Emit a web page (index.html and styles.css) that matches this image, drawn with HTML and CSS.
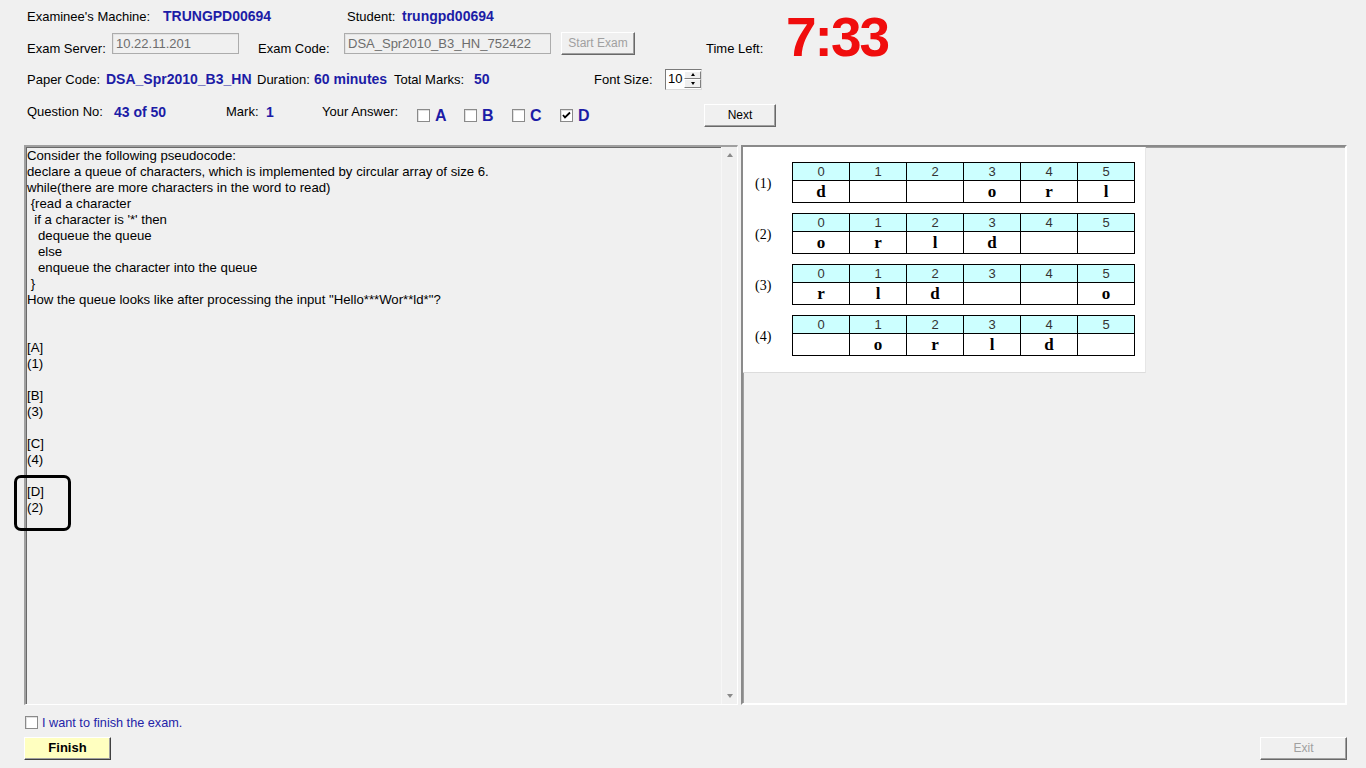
FILE: index.html
```html
<!DOCTYPE html>
<html>
<head>
<meta charset="utf-8">
<link rel="stylesheet" href="styles.css">
</head>
<body>
<div class="top">
  <div class="head">
    <div class="head-left">
      <div class="row row1">
        <span class="lbl">Examinee's Machine:</span>
        <span class="val">TRUNGPD00694</span>
        <span class="lbl">Student:</span>
        <span class="val">trungpd00694</span>
      </div>
      <div class="row row2">
        <span class="lbl low">Exam Server:</span>
        <span class="cell"><span class="tbox tb-server">10.22.11.201</span></span>
        <span class="lbl low">Exam Code:</span>
        <span class="cell"><span class="tbox tb-code">DSA_Spr2010_B3_HN_752422</span></span>
        <span class="cell"><span class="btn btn-start">Start Exam</span></span>
        <span class="lbl low">Time Left:</span>
      </div>
    </div>
    <div class="timer">7:33</div>
  </div>
  <div class="row row3">
    <span class="lbl">Paper Code:</span>
    <span class="val">DSA_Spr2010_B3_HN</span>
    <span class="lbl">Duration:</span>
    <span class="val">60 minutes</span>
    <span class="lbl">Total Marks:</span>
    <span class="val">50</span>
    <span class="lbl">Font Size:</span>
    <span class="spin"><span class="spin-val">10</span><span class="spin-btns"><span class="sb"><span class="tri-up"></span></span><span class="sb"><span class="tri-down"></span></span></span></span>
  </div>
  <div class="row row4">
    <span class="lbl">Question No:</span>
    <span class="val">43 of 50</span>
    <span class="lbl">Mark:</span>
    <span class="val">1</span>
    <span class="lbl">Your Answer:</span>
    <span class="ans"><span class="cb"></span><span class="letter">A</span></span>
    <span class="ans"><span class="cb"></span><span class="letter">B</span></span>
    <span class="ans"><span class="cb"></span><span class="letter">C</span></span>
    <span class="ans"><span class="cb"><svg width="11" height="11" viewBox="0 0 11 11"><polyline points="2,5 4,7.5 9,2.5" fill="none" stroke="#000" stroke-width="1.8"/></svg></span><span class="letter">D</span></span>
    <span class="btn btn-next">Next</span>
  </div>
</div>

<div class="panels">
  <div class="qpanel">
    <div class="qtext">Consider the following pseudocode:
declare a queue of characters, which is implemented by circular array of size 6.
while(there are more characters in the word to read)
 {read a character
  if a character is '*' then
   dequeue the queue
   else
   enqueue the character into the queue
 }
How the queue looks like after processing the input "Hello***Wor**ld*"?


[A]
(1)

[B]
(3)

[C]
(4)

[D]
(2)</div>
    <div class="vscroll"><span class="tri-up sc"></span><span class="tri-down sc"></span></div>
  </div>
  <div class="ipanel">
    <div class="figure">
      <div class="qrow">
        <span class="qlabel">(1)</span>
        <table class="qt">
          <tr class="hd"><td>0</td><td>1</td><td>2</td><td>3</td><td>4</td><td>5</td></tr>
          <tr class="dt"><td>d</td><td></td><td></td><td>o</td><td>r</td><td>l</td></tr>
        </table>
      </div>
      <div class="qrow">
        <span class="qlabel">(2)</span>
        <table class="qt">
          <tr class="hd"><td>0</td><td>1</td><td>2</td><td>3</td><td>4</td><td>5</td></tr>
          <tr class="dt"><td>o</td><td>r</td><td>l</td><td>d</td><td></td><td></td></tr>
        </table>
      </div>
      <div class="qrow">
        <span class="qlabel">(3)</span>
        <table class="qt">
          <tr class="hd"><td>0</td><td>1</td><td>2</td><td>3</td><td>4</td><td>5</td></tr>
          <tr class="dt"><td>r</td><td>l</td><td>d</td><td></td><td></td><td>o</td></tr>
        </table>
      </div>
      <div class="qrow">
        <span class="qlabel">(4)</span>
        <table class="qt">
          <tr class="hd"><td>0</td><td>1</td><td>2</td><td>3</td><td>4</td><td>5</td></tr>
          <tr class="dt"><td></td><td>o</td><td>r</td><td>l</td><td>d</td><td></td></tr>
        </table>
      </div>
    </div>
  </div>
</div>

<div class="finish-row">
  <span class="cb"></span><span class="finish-text">I want to finish the exam.</span>
</div>
<div class="bottom">
  <span class="btn btn-finish">Finish</span>
  <span class="btn btn-exit">Exit</span>
</div>

<div class="highlight"></div>
</body>
</html>
```
FILE: styles.css
```css
* { box-sizing: border-box; }
html, body { margin: 0; padding: 0; }
body {
  width: 1366px;
  height: 768px;
  background: #f0f0f0;
  font-family: "Liberation Sans", Arial, sans-serif;
  font-size: 13px;
  color: #000;
  overflow: hidden;
  position: relative;
}
.top { padding-left: 27px; }
.head { display: flex; height: 58px; align-items: flex-start; }
.head-left { width: 759px; }
.row { display: grid; align-items: center; white-space: nowrap; }
.lbl { line-height: 15px; }
.val { font-weight: bold; font-size: 14px; color: #1c1ca6; line-height: 16px; }
.row1 { height: 32px; grid-template-columns: 136px 184px 55px auto; }
.row2 { height: 26px; grid-template-columns: 85px 146px 86px 217px 145px 80px; align-items: start; }
.low { padding-top: 9px; }
.cell { padding-top: 1px; }
.tbox {
  display: block;
  height: 21px;
  border: 1px solid #acacac;
  box-shadow: inset 1px 1px 0 #e3e3e3;
  background: #f0f0f0;
  color: #6d6d6d;
  padding: 1px 3px;
  line-height: 17px;
  font-size: 13px;
  overflow: hidden;
}
.tb-server { width: 127px; }
.tb-code { width: 207px; }
.btn {
  display: inline-block;
  text-align: center;
  border: 1px solid;
  border-color: #ffffff #696969 #696969 #ffffff;
  box-shadow: inset -1px -1px 0 #a0a0a0;
  background: #f0f0f0;
  font-size: 12px;
}
.btn-start { width: 74px; height: 23px; line-height: 20px; color: #a0a0a0; margin-top: -1px; }
.timer {
  color: #f00d0d;
  font-weight: bold;
  font-size: 55px;
  line-height: 55px;
  letter-spacing: -2px;
  margin-top: 10px;
}
.row3 { height: 42px; grid-template-columns: 79px 151px 57px 80px 80px 120px 71px auto; }
.spin {
  display: flex;
  width: 37px;
  height: 21px;
  border: 1px solid #7a7a7a;
  border-right-color: #dcdcdc;
  border-bottom-color: #dcdcdc;
  background: #fff;
}
.spin-val { padding-left: 2px; line-height: 18px; font-size: 13px; flex: 1; }
.spin-btns { display: flex; flex-direction: column; width: 17px; padding: 1px 0; }
.sb {
  flex: 1;
  background: #f0f0f0;
  border: 1px solid;
  border-color: #fff #808080 #808080 #fff;
  display: flex; align-items: center; justify-content: center;
}
.tri-up, .tri-down { width: 0; height: 0; border-left: 2.5px solid transparent; border-right: 2.5px solid transparent; }
.tri-up { border-bottom: 3px solid #000; }
.tri-down { border-top: 3px solid #000; }
.row4 { height: 30px; grid-template-columns: 87px 112px 40px 56px 95px 47px 48px 48px 144px auto; align-items: start; }
.row4 > .lbl, .row4 > .val { margin-top: 4px; }
.ans { display: flex; align-items: center; margin-top: 6px; }
.cb {
  display: inline-flex;
  align-items: center;
  justify-content: center;
  width: 13px; height: 13px;
  border: 1px solid #8a8a8a;
  background: #fff;
  box-shadow: inset 1px 1px 0 #e0e0e0;
}
.letter { font-weight: bold; font-size: 16px; color: #1c1ca6; margin-left: 5px; line-height: 18px; padding-top: 1px; }
.btn-next { width: 72px; height: 23px; line-height: 20px; margin-top: 4px; color: #000; }

.panels {
  display: flex;
  margin: 15px 19px 0 24px;
  height: 560px;
  gap: 3px;
}
.qpanel {
  width: 714px;
  display: flex;
  border-top: 2px solid #a0a0a0;
  border-left: 2px solid #a0a0a0;
  border-right: 1px solid #fff;
  border-bottom: 1px solid #fff;
  box-shadow: inset 1px 1px 0 #696969;
}
.qtext {
  flex: 1;
  white-space: pre;
  line-height: 16px;
  padding: 1px 0 0 1px;
  font-size: 13.2px;
}
.vscroll {
  width: 16px;
  display: flex;
  flex-direction: column;
  justify-content: space-between;
  align-items: center;
  padding: 6px 0 6px;
  background: #f0f0f0;
  border-left: 1px solid #f7f7f7;
}
.sc { border-left-width: 3.5px; border-right-width: 3.5px; }
.sc.tri-up { border-bottom: 4px solid #8a8a8a; }
.sc.tri-down { border-top: 4px solid #8a8a8a; }
.ipanel {
  flex: 1;
  border: 2px solid;
  border-color: #8a8a8a #fff #fff #8a8a8a;
  box-shadow: inset 1px 1px 0 #a0a0a0;
  padding: 0;
}
.figure {
  width: 403px;
  background: #fff;
  padding: 15px 0 16px 12px;
  border-bottom: 1px solid #dcdcdc;
  border-right: 1px solid #e6e6e6;
  display: flex;
  flex-direction: column;
  gap: 10px;
}
.qrow { display: flex; align-items: center; }
.qlabel { font-family: "Liberation Serif", "Times New Roman", serif; font-size: 14px; width: 37px; padding-top: 2px; }
.qt { border-collapse: collapse; }
.qt td { border: 1px solid #000; text-align: center; padding: 0; width: 57px; }
.hd td { background: #ccffff; height: 18px; font-size: 13px; color: #333; line-height: 16px; }
.dt td { height: 22px; font-family: "Liberation Serif", "Times New Roman", serif; font-weight: bold; font-size: 17px; line-height: 20px; }

.finish-row { display: flex; align-items: center; margin: 11px 0 0 25px; height: 13px; }
.finish-text { color: #2424a8; margin-left: 4px; font-size: 12.7px; }
.bottom { display: flex; justify-content: space-between; margin: 8px 19px 0 24px; }
.btn-finish {
  width: 87px; height: 23px; line-height: 20px;
  background: #ffffc0;
  font-weight: bold; font-size: 13px;
  border-color: #fff #404040 #404040 #fff;
}
.btn-exit { width: 87px; height: 23px; line-height: 20px; color: #a0a0a0; }
.highlight {
  position: absolute;
  left: 14px; top: 475px;
  width: 57px; height: 56px;
  border: 3px solid #000;
  border-radius: 7px;
}
```
